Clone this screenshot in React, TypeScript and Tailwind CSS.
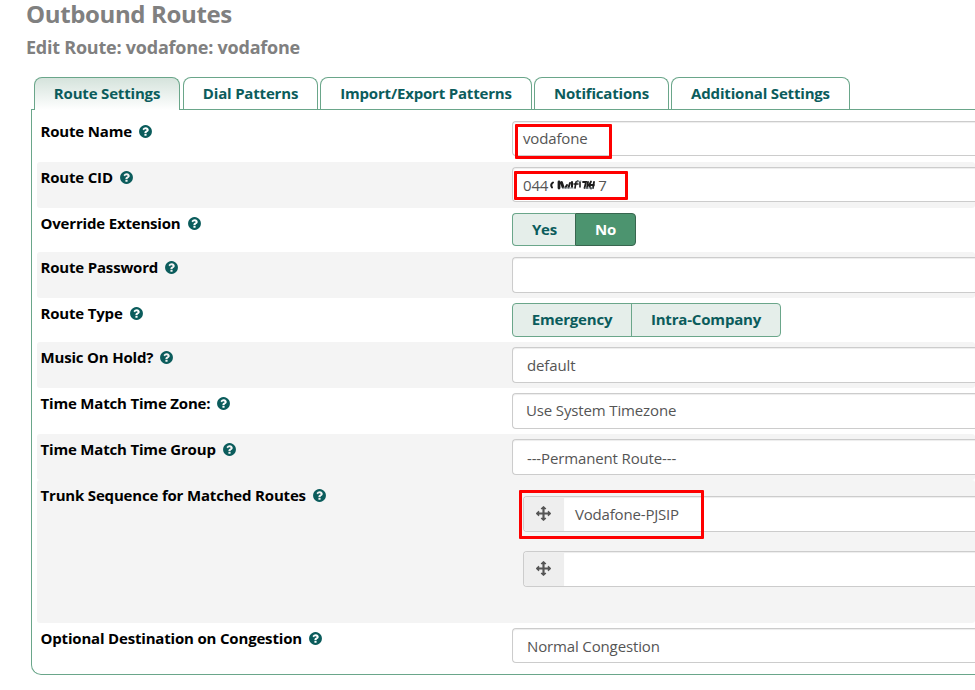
import type { ReactNode } from 'react';

function HelpIcon() {
  return (
    <svg viewBox="0 0 1792 1792" className="size-[15px] shrink-0 fill-[#0b5c5c]">
      <path d="M1024 1376v-192q0-14-9-23t-23-9h-192q-14 0-23 9t-9 23v192q0 14 9 23t23 9h192q14 0 23-9t9-23zm256-672q0-88-55.5-163t-138.500-116-170.500-41q-243 0-371 213-15 24 8 42l132 100q7 6 19 6 16 0 25-12 53-68 86-92 34-24 86-24 48 0 85.500 26t37.500 59q0 38-20 61t-68 45q-63 28-115.500 86.500t-52.500 125.500v36q0 14 9 23t23 9h192q14 0 23-9t9-23q0-19 21.500-49.500t54.500-49.500q32-18 49-28.500t46-35 44.500-48 28-60.500 12.500-81zm384 192q0 209-103 385.500t-279.500 279.500-385.500 103-385.500-103-279.500-279.500-103-385.500 103-385.500 279.500-279.500 385.500-103 385.500 103 279.500 279.500 103 385.500z" />
    </svg>
  );
}

function MoveIcon() {
  return (
    <svg viewBox="0 0 1792 1792" className="size-[15px] fill-[#555]">
      <path d="M1792 896q0 26-19 45l-256 256q-19 19-45 19t-45-19-19-45v-128h-384v384h128q26 0 45 19t19 45-19 45l-256 256q-19 19-45 19t-45-19l-256-256q-19-19-19-45t19-45 45-19h128v-384h-384v128q0 26-19 45t-45 19-45-19l-256-256q-19-19-19-45t19-45l256-256q19-19 45-19t45 19 19 45v128h384v-384h-128q-26 0-45-19t-19-45 19-45l256-256q19-19 45-19t45 19l256 256q19 19 19 45t-19 45-45 19h-128v384h384v-128q0-26 19-45t45-19 45 19l256 256q19 19 19 45z" />
    </svg>
  );
}

function Row({ label, className, children }: { label: string; className: string; children: ReactNode }) {
  return (
    <div className={`flex items-start rounded-[3px] pl-[3.5px] ${className}`}>
      <div className="mt-[5px] flex h-5 w-[471.5px] shrink-0 items-center gap-[6px] font-bold tracking-[-0.18px] text-black">
        <span className="whitespace-nowrap">{label}</span>
        <HelpIcon />
      </div>
      {children}
    </div>
  );
}

function Field({ className, children }: { className: string; children?: ReactNode }) {
  return (
    <div
      className={`mt-[5px] flex flex-1 items-center rounded-l-[4px] border border-r-0 border-[#ccc] bg-white tracking-[-0.14px] whitespace-nowrap shadow-[inset_0_1px_1px_rgba(0,0,0,0.075)] ${className}`}
    >
      {children}
    </div>
  );
}

function Trunk({ name }: { name: string }) {
  return (
    <div className="flex h-9 overflow-hidden rounded-l-[4px] border border-r-0 border-[#ccc] bg-white">
      <div className="flex w-10 shrink-0 items-center justify-center bg-[#eee] pr-px pb-px">
        <MoveIcon />
      </div>
      <div className="flex flex-1 items-center pl-[11px] tracking-[-0.18px] shadow-[inset_0_1px_1px_rgba(0,0,0,0.075)]">
        {name}
      </div>
    </div>
  );
}

/* Scribble that hides the middle digits of the caller id */
function Redaction() {
  return (
    <svg viewBox="0 0 48 14" className="h-[14px] w-12 shrink-0 blur-[0.4px]" fill="none" stroke="#1c1c1c" strokeLinecap="round">
      <path d="M5 4.500Q2 6.500 4 9.500" strokeWidth="2" />
      <path d="M11 4v6M13.500 4.500l1.500 4.500" strokeWidth="2.800" />
      <path d="M19 7l-1.500 2.500M22 5l-1.500 4.500M24 4v5" strokeWidth="2" />
      <path d="M27 10l1-6 2-1M26 6h4M32 4v5" strokeWidth="1.600" />
      <path d="M35 4h3l-1.500 6M40 4l-1 6M43 3.500l-2 4 2 3M46 4l-1 6M41 7h5" strokeWidth="1.800" />
      <path d="M15 10h10M29 4l4-1M37 10h8" stroke="#7d868b" strokeWidth="1.200" />
    </svg>
  );
}

const tabs = [
  { label: 'Route Settings', className: 'ml-[3px] w-[146px] h-[33px] bg-gradient-to-b from-[#d5e3dc] to-white' },
  { label: 'Dial Patterns', className: 'ml-[3px] w-[135px] h-8 bg-white' },
  { label: 'Import/Export Patterns', className: 'ml-[2px] w-[212px] h-8 bg-white' },
  { label: 'Notifications', className: 'ml-[2px] w-[135px] h-8 bg-white' },
  { label: 'Additional Settings', className: 'ml-[2px] w-[179px] h-8 bg-white' },
];

export default function App() {
  return (
    <div className="relative h-[690px] w-[975px] overflow-hidden bg-white font-['Open_Sans',sans-serif] text-[15px] leading-5 text-[#555]">
      <h1 className="ml-[26px] h-[30px] text-[24px] leading-[28px] font-bold tracking-[-0.36px] text-[#808080]">Outbound Routes</h1>
      <h2 className="ml-[26px] h-[47px] text-[18px] leading-[35px] font-bold tracking-[-0.23px] text-[#808080]">
        Edit Route: vodafone: vodafone
      </h2>

      <nav className="relative z-10 ml-[31px] flex h-8 items-start">
        {tabs.map((t) => (
          <div
            key={t.label}
            className={`flex shrink-0 justify-center rounded-t-[8px] border border-b-0 border-[#6aa68a] pt-[5px] font-bold tracking-[-0.18px] whitespace-nowrap text-[#0b5c5c] ${t.className}`}
          >
            {t.label}
          </div>
        ))}
      </nav>

      <main className="ml-[31px] h-[566px] rounded-bl-[10px] border border-r-0 border-[#6aa68a] pt-[6px] pl-[5px]">
        <Row label="Route Name" className="h-[46px]">
          <Field className="h-[35px] pb-[2px] pl-[10px]">vodafone</Field>
        </Row>
        <Row label="Route CID" className="h-[46px] bg-[#f4f4f4]">
          <Field className="h-[35px] pl-[10px]">
            <span>044</span>
            <Redaction />
            <span className="ml-[2px]">7</span>
          </Field>
        </Row>
        <Row label="Override Extension" className="h-11">
          <div className="mt-[5px] flex h-[33px] font-bold tracking-[-0.15px]">
            <div className="flex w-[63px] items-center justify-center rounded-l-[4px] border border-r-0 border-[#6aa68a] bg-[#e5eeea] pb-[2px] pl-px text-[#0b5c5c]">
              Yes
            </div>
            <div className="flex w-[61px] items-center justify-center rounded-r-[4px] border border-[#38664f] bg-[#4c946f] pb-[2px] text-white">
              No
            </div>
          </div>
        </Row>
        <Row label="Route Password" className="h-[46px] bg-[#f4f4f4]">
          <Field className="h-9" />
        </Row>
        <Row label="Route Type" className="h-11">
          <div className="mt-[5px] flex h-[34px] rounded-[4px] border border-[#6aa68a] bg-[#e5eeea] font-bold tracking-[-0.18px] text-[#0b5c5c]">
            <div className="flex w-[119px] items-center justify-center border-r border-[#6aa68a] pb-[2px]">Emergency</div>
            <div className="flex w-[148px] items-center justify-center pb-[2px]">Intra-Company</div>
          </div>
        </Row>
        <Row label="Music On Hold?" className="h-[46px] bg-[#f4f4f4]">
          <Field className="h-9 pl-[14px]">default</Field>
        </Row>
        <Row label="Time Match Time Zone:" className="h-[46px]">
          <Field className="h-9 pb-[2px] pl-[13px]">Use System Timezone</Field>
        </Row>
        <Row label="Time Match Time Group" className="h-[46px] bg-[#f4f4f4]">
          <Field className="h-9 pt-[2px] pl-[14px]">---Permanent Route---</Field>
        </Row>
        <Row label="Trunk Sequence for Matched Routes" className="h-[143px] bg-[#f4f4f4]">
          <div className="mt-4 ml-[11px] flex flex-1 flex-col gap-[19px]">
            <Trunk name="Vodafone-PJSIP" />
            <Trunk name="" />
          </div>
        </Row>
        <Row label="Optional Destination on Congestion" className="h-[46px]">
          <Field className="h-[35px] pt-[1px] pl-[14px]">Normal Congestion</Field>
        </Row>
      </main>

      <div className="absolute top-[124px] left-[515px] h-[35px] w-[97px] rounded-[1px] border-3 border-[#fe0000]" />
      <div className="absolute top-[171px] left-[514px] h-[29px] w-[114px] rounded-[1px] border-3 border-[#fe0000]" />
      <div className="absolute top-[490px] left-[519px] h-[49px] w-[185px] rounded-[1px] border-3 border-[#fe0000]" />
    </div>
  );
}
